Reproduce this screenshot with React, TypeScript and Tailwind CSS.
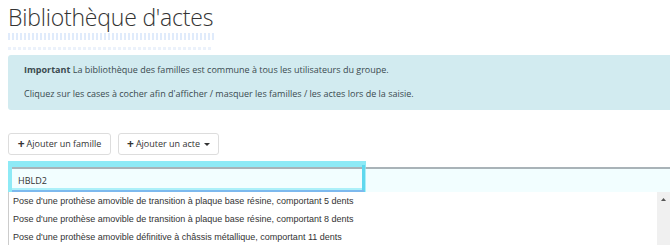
const items = [
  "Pose d'une prothèse amovible de transition à plaque base résine, comportant 5 dents",
  "Pose d'une prothèse amovible de transition à plaque base résine, comportant 8 dents",
  "Pose d'une prothèse amovible définitive à châssis métallique, comportant 11 dents",
]

export default function App() {
  return (
    <div className="w-[670px] h-[245px] overflow-hidden bg-white text-[#333] font-['Open_Sans',sans-serif]">
      <div className="pl-[8px] pt-[2px]">
        <h1 className="text-[23px] font-light leading-[30px] text-[#333] tracking-[-0.2px]">Bibliothèque d'actes</h1>
        {/* faint ghost lines under the title */}
        <div className="h-[23px] pt-[1px] blur-[0.5px]">
          <div className="w-[206px] h-[7px] bg-[repeating-linear-gradient(90deg,#d2e2f9_0px,#d2e2f9_2px,#ffffff_2px,#ffffff_4px)] opacity-70" />
          <div className="mt-[7px] w-[205px] h-[3px] bg-[repeating-linear-gradient(90deg,#e2ebf9_0px,#e2ebf9_3px,#ffffff_3px,#ffffff_5px)] opacity-70" />
        </div>
      </div>

      <div className="ml-[8px] h-[55px] bg-[#d2ebf0] rounded-l-[3px] pl-[16px] pt-[9px] text-[9px] leading-[12px] text-[#3a4a4f]">
        <p><span className="font-bold">Important</span> La bibliothèque des familles est commune à tous les utilisateurs du groupe.</p>
        <p className="mt-[12px]">Cliquez sur les cases à cocher afin d'afficher / masquer les familles / les actes lors de la saisie.</p>
      </div>

      <div className="flex gap-[7px] ml-[8px] mt-[23px]">
        <button className="h-[22px] w-[103px] border border-[#ddd] rounded-[3px] bg-white text-[9px] text-[#333] flex items-center justify-center gap-[2px]">
          <span className="font-bold text-[12px] leading-none">+</span>Ajouter un famille
        </button>
        <button className="h-[22px] w-[101px] border border-[#ddd] rounded-[3px] bg-white text-[9px] text-[#333] flex items-center justify-center gap-[2px]">
          <span className="font-bold text-[12px] leading-none">+</span>Ajouter un acte
          <svg width="6" height="3" viewBox="0 0 6 3" className="ml-[2px]"><path d="M0 0h6L3 3z" fill="#333" /></svg>
        </button>
      </div>

      <div className="relative mt-[6px]">
        <div className="ml-[8px] h-[6px] w-[358px] bg-[#8eeaf6]" />
        <div className="flex">
          <div className="w-[12px] h-[25px] flex">
            <div className="ml-[8px] w-[4px] bg-[#8eeaf6]" />
          </div>
          <div className="flex-1 h-[25px] border-t-2 border-[#a9b3b8] bg-[#f2feff] pl-[6px] flex items-center text-[9px] text-[#333]">
            HBLD2
          </div>
        </div>
        <div className="absolute left-[8px] top-0 w-[358px] h-[31px] border-[4px] border-[#8eeaf6] opacity-70 pointer-events-none" />
        <div className="absolute left-[362px] top-[4px] w-[3px] h-[27px] bg-[#5fd8ee]" />
        <div className="absolute left-[12px] top-[29px] w-[352px] h-[2px] bg-[#7db9ee]" />
      </div>

      <div className="flex ml-[8px] border-l border-[#ccc]">
        <div className="flex-1 font-['Liberation_Sans',Arial,sans-serif] text-[9px] text-[#333]">
          {items.map((t) => (
            <div key={t} className="h-[18px] leading-[18px] pl-[4px] whitespace-nowrap">{t}</div>
          ))}
        </div>
        <div className="w-[13px] h-[60px] bg-[#f0f0f0] flex justify-center pt-[6px]">
          <svg width="5" height="3" viewBox="0 0 5 3"><path d="M0 3h5L2.5 0z" fill="#555" /></svg>
        </div>
      </div>
    </div>
  )
}
